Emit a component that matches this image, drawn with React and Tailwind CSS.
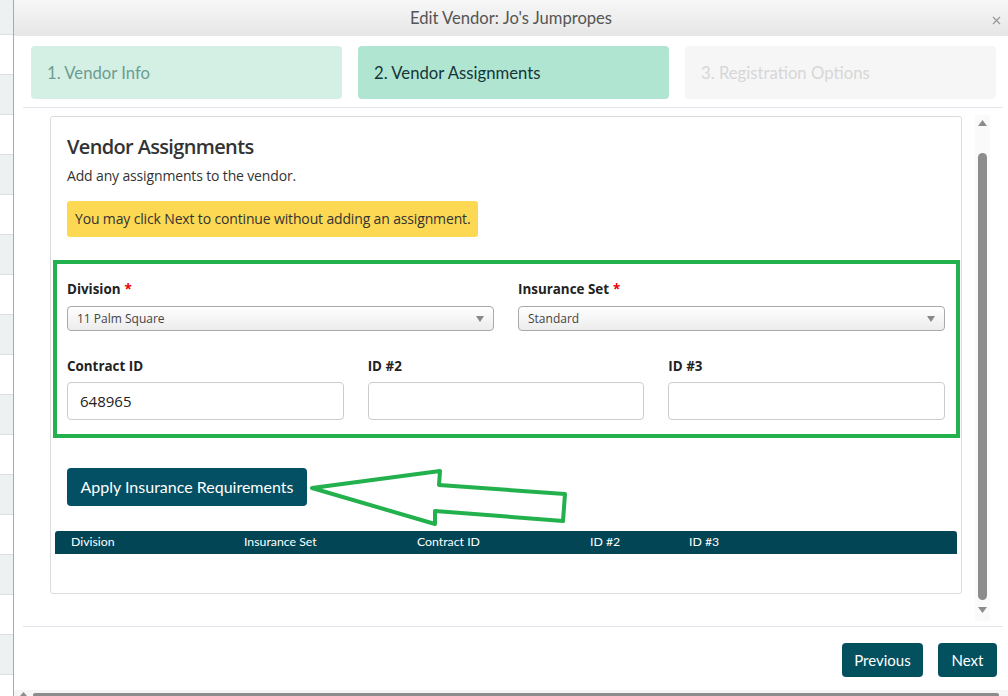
import React from 'react';

const body = { fontFamily: '"Open Sans", "Noto Sans", sans-serif' };
const narrow = { fontFamily: 'Lato, "Open Sans", sans-serif' };

const BgRows = () => {
  const rows = [];
  for (let i = 0; i < 18; i++) {
    rows.push(
      <div
        key={i}
        className={`${i === 0 ? 'h-[35px]' : 'h-[40px]'} border-b border-[#dcdfe2] ${i % 2 === 0 ? 'bg-[#eef1f2]' : 'bg-white'}`}
      />
    );
  }
  return <div className="w-[14px] shrink-0 overflow-hidden border-r border-[#a9a9a9]">{rows}</div>;
};

const Caret = () => (
  <svg width="8" height="6" viewBox="0 0 8 6" className="shrink-0">
    <path d="M0 0 L8 0 L4 6 Z" fill="#888" />
  </svg>
);

const Select = ({ value }) => (
  <div className="h-[25px] mt-[7px] flex items-center justify-between pl-[9px] pr-[9px] rounded-[4px] border border-[#aaa] bg-gradient-to-b from-white to-[#ececec] text-[12px] text-[#444]">
    <span>{value}</span>
    <Caret />
  </div>
);

const Field = ({ label, value, required }) => (
  <div className="flex flex-col">
    <div className="h-[20px] leading-[20px] text-[13.4px] font-bold text-[#222]">
      {label}
      {required && <span className="text-[#e00] ml-[4px]">*</span>}
    </div>
    {value !== undefined && <Select value={value} />}
  </div>
);

const Input = ({ label, value }) => (
  <div className="flex flex-col">
    <div className="h-[20px] leading-[20px] text-[13.4px] font-bold text-[#222]">{label}</div>
    <div className="h-[38px] mt-[6px] rounded-[4px] border border-[#ccc] bg-white flex items-center px-[12px] text-[15px] text-[#222]">
      {value}
    </div>
  </div>
);

export default function App() {
  return (
    <div className="w-[1008px] h-[696px] flex overflow-hidden bg-white" style={body}>
      <BgRows />
      <div className="flex-1 flex flex-col relative bg-white">
        <div className="h-[36px] shrink-0 flex items-center justify-center bg-gradient-to-b from-[#f7f7f7] to-[#e6e6e6] relative">
          <span className="text-[16.6px] text-[#555]" style={narrow}>Edit Vendor: Jo's Jumpropes</span>
          <svg width="9" height="9" viewBox="0 0 9 9" className="absolute right-[7px] top-[16px]">
            <path d="M1 1 L8 8 M8 1 L1 8" stroke="#999" strokeWidth="1.3" />
          </svg>
        </div>

        <div className="flex gap-4 pl-[17px] pt-[10px]" style={narrow}>
          <div className="w-[311px] h-[53px] rounded-[4px] bg-[#d4f0e5] flex items-center px-[16px] pt-[2px] text-[16.7px] text-[#6e9c90]">1. Vendor Info</div>
          <div className="w-[311px] h-[53px] rounded-[4px] bg-[#b0e5d1] flex items-center px-[16px] pt-[2px] text-[16.7px] text-[#14363a]">2. Vendor Assignments</div>
          <div className="w-[311px] h-[53px] rounded-[4px] bg-[#f6f6f6] flex items-center px-[16px] pt-[2px] text-[16.7px] text-[#d6d6d6]">3. Registration Options</div>
        </div>

        <div className="mt-[8px] ml-[9px] mr-[5px] h-px bg-[#e2e6ec]" />

        <div className="h-[518px] flex">
          <div className="ml-[36px] mt-[8px] w-[912px] h-[478px] border border-[#dcdcdc] rounded-[3px] px-[16px] pt-[16px]">
            <div className="text-[20px] leading-[28px] font-semibold text-[#333] tracking-[-0.65px]">Vendor Assignments</div>
            <div className="mt-[5px] text-[14px] leading-[20px] text-[#333] tracking-[-0.15px]">Add any assignments to the vendor.</div>
            <div className="mt-[15px] w-fit rounded-[3px] bg-[#fdd853] px-[8px] py-[8px] text-[14px] leading-[20px] text-[#333] tracking-[-0.15px]">
              You may click Next to continue without adding an assignment.
            </div>

            <div className="mt-[23px] ml-[-14px] mr-[-15px] border-4 border-[#22b14c] pl-[10px] pr-[11px] pt-[15px] pb-[14px]">
              <div className="grid grid-cols-2 gap-x-6">
                <Field label="Division" required value="11 Palm Square" />
                <Field label="Insurance Set" required value="Standard" />
              </div>
              <div className="grid grid-cols-3 gap-x-6 mt-[25px]">
                <Input label="Contract ID" value="648965" />
                <Input label="ID #2" value="" />
                <Input label="ID #3" value="" />
              </div>
            </div>

            <div className="relative mt-[30px] h-[38px]">
              <div className="w-[240px] h-[38px] rounded-[4px] bg-[#034f63] flex items-center justify-center text-white text-[16px]" style={narrow}>
                Apply Insurance Requirements
              </div>
              <svg className="absolute left-[230px] top-[-8px]" width="280" height="70" viewBox="0 0 280 70">
                <path
                  d="M15 28 L143 11 L142 25 L268 34 L266 61 L138 51 L138 64 Z"
                  fill="none"
                  stroke="#22b14c"
                  strokeWidth="4"
                  strokeLinejoin="round"
                />
              </svg>
            </div>

            <div className="mt-[25px] mx-[-12px] h-[23px] rounded-t-[3px] bg-[#024656] flex items-center text-white text-[12.3px]" style={narrow}>
              <span className="ml-[16px] w-[173px]">Division</span>
              <span className="w-[173px]">Insurance Set</span>
              <span className="w-[173px]">Contract ID</span>
              <span className="w-[99px]">ID #2</span>
              <span>ID #3</span>
            </div>
          </div>

          <div className="ml-[13px] mt-[7px] w-[15px] h-[506px] bg-[#fafafa] flex flex-col items-center">
            <svg width="9" height="6" viewBox="0 0 9 6" className="mt-[5px]">
              <path d="M0 6 L9 6 L4.5 0 Z" fill="#8c8c8c" />
            </svg>
            <div className="mt-[27px] w-[9px] h-[447px] rounded-full bg-[#8c8c8c]" />
            <svg width="9" height="6" viewBox="0 0 9 6" className="mt-[7px]">
              <path d="M0 0 L9 0 L4.5 6 Z" fill="#8c8c8c" />
            </svg>
          </div>
        </div>

        <div className="ml-[9px] mr-[5px] h-px bg-[#e2e6ec]" />

        <div className="h-[63px] flex justify-end items-start pt-[16px] pr-[11px] gap-[15px]" style={narrow}>
          <div className="w-[81px] h-[34px] rounded-[4px] bg-[#03505f] flex items-center justify-center text-white text-[15px]">Previous</div>
          <div className="w-[59px] h-[34px] rounded-[4px] bg-[#03505f] flex items-center justify-center text-white text-[15px]">Next</div>
        </div>

        <div className="h-[6px] bg-[#f5f5f5] flex items-end">
          <svg width="7" height="4" viewBox="0 0 7 4" className="ml-[6px]">
            <path d="M0 4 L7 4 L3.5 0 Z" fill="#8c8c8c" />
          </svg>
          <div className="ml-[6px] h-[3px] w-[966px] rounded-t-[2px] bg-[#8c8c8c]" />
        </div>
      </div>
    </div>
  );
}
